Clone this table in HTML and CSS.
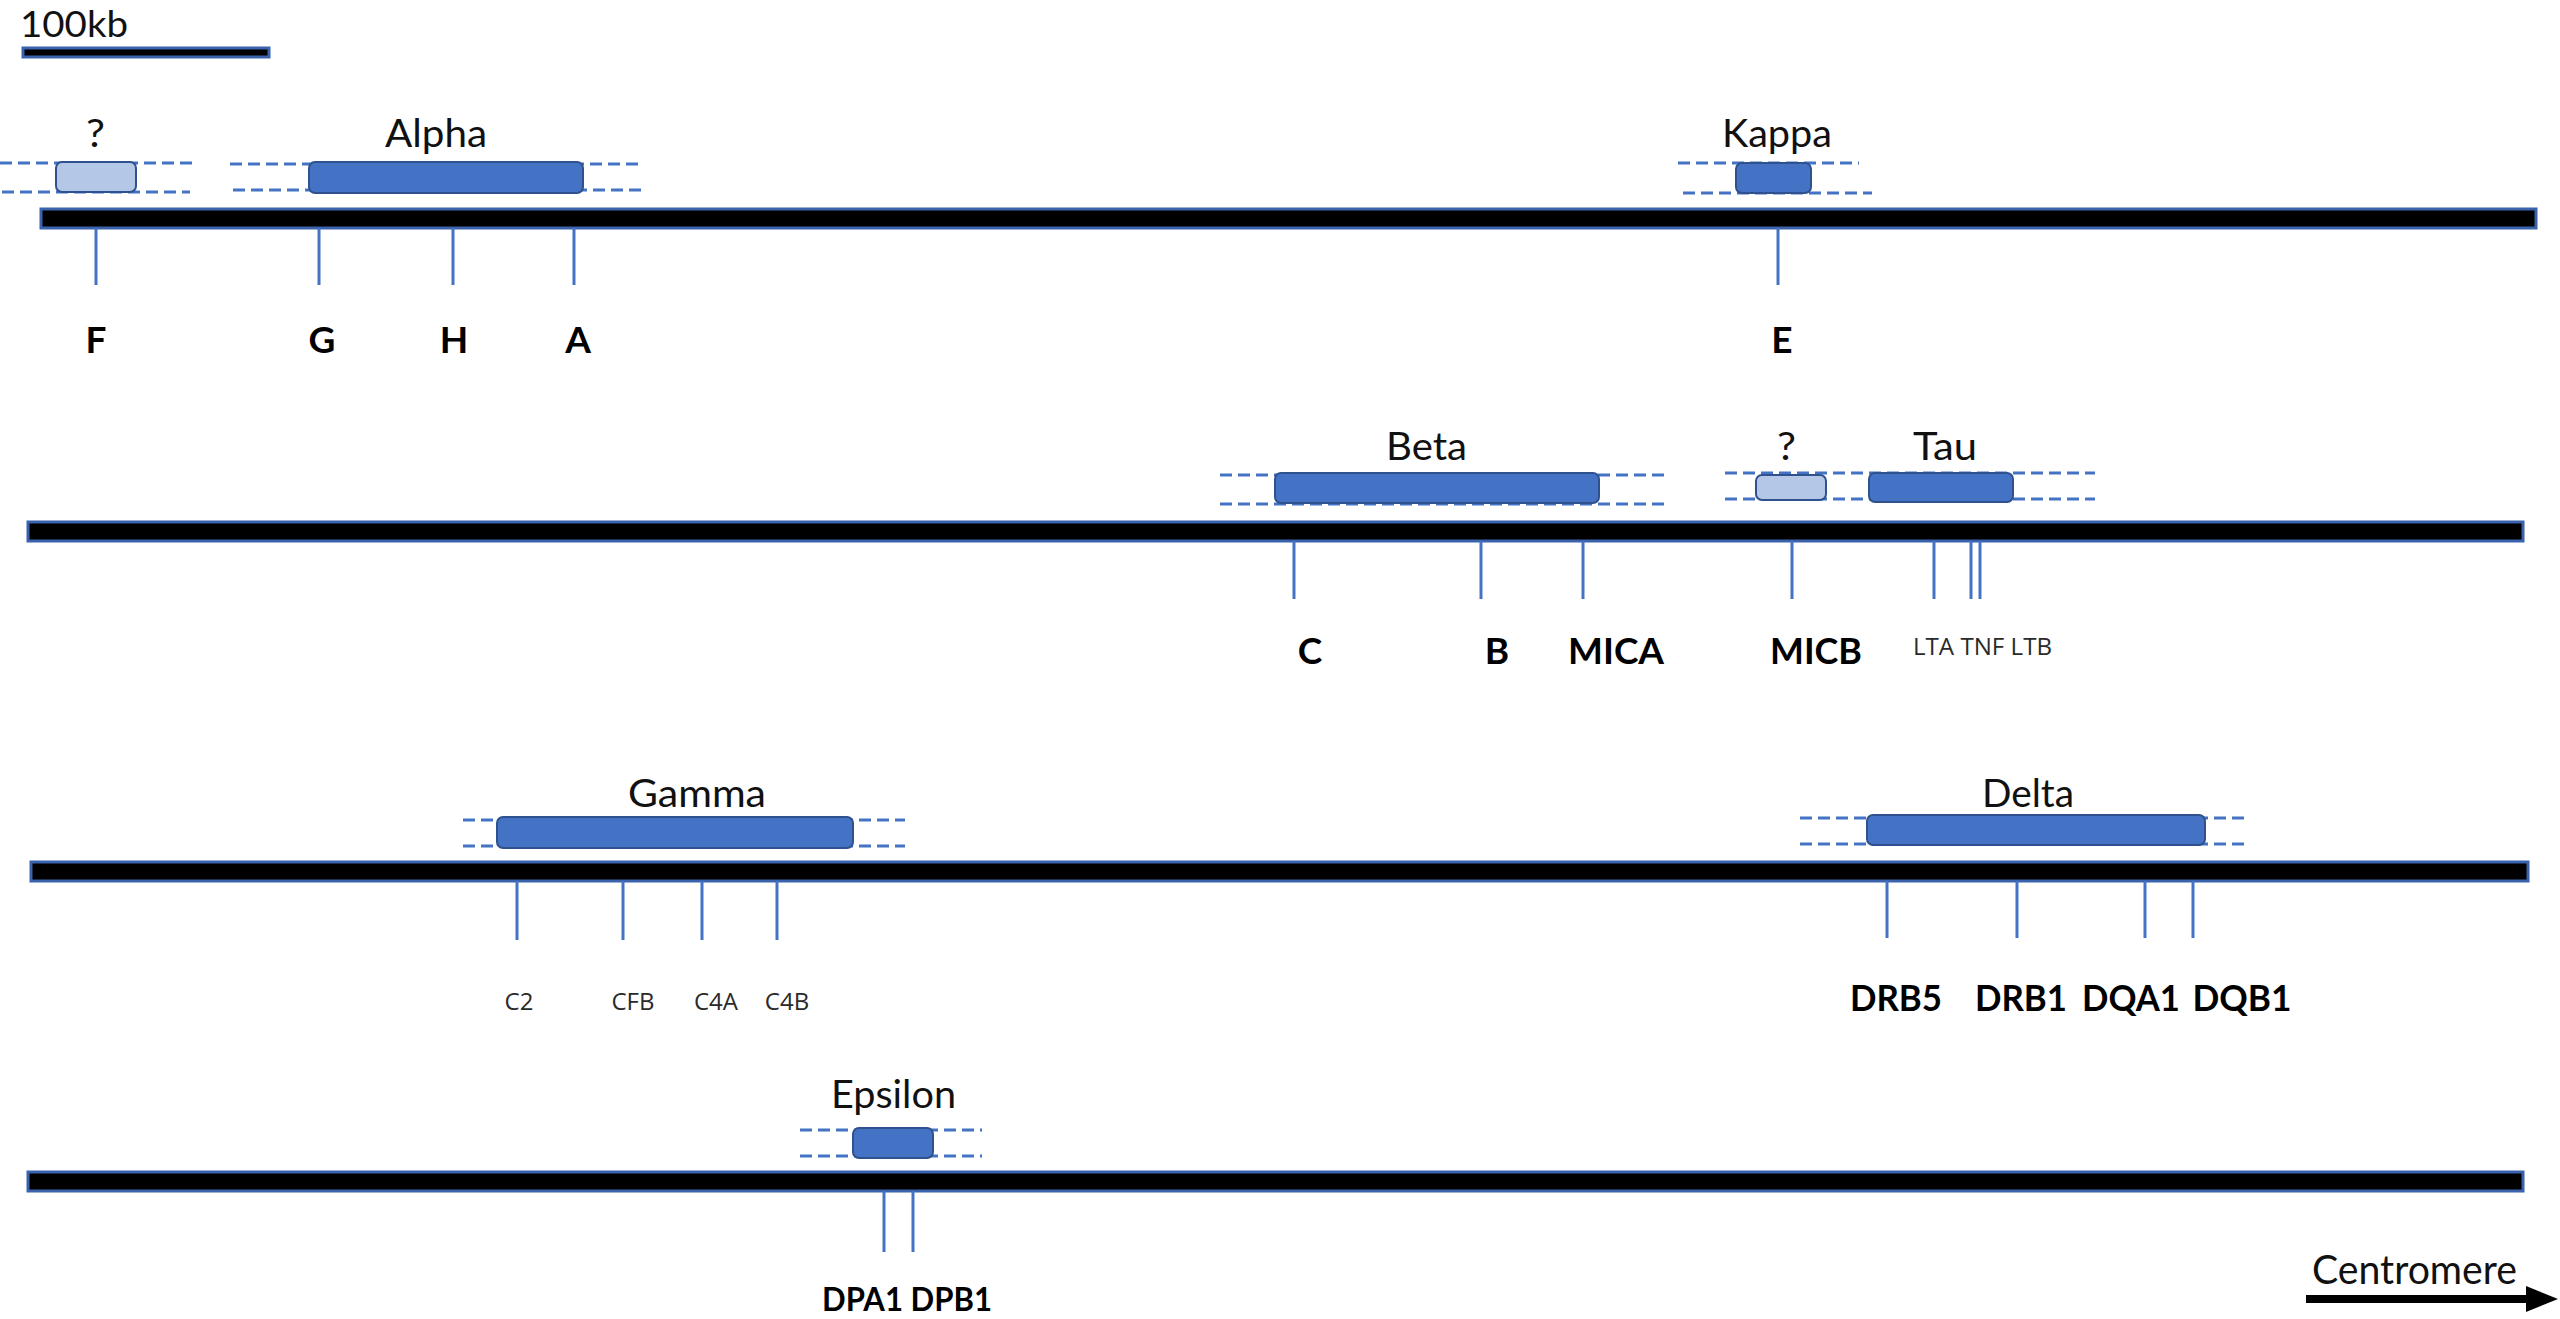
FILE: index.html
```html
<!DOCTYPE html>
<html lang="en">
<head>
<meta charset="utf-8">
<title>MHC region map</title>
<link rel="stylesheet" href="styles.css">
</head>
<body>
<svg class="map" width="2560" height="1319" viewBox="0 0 2560 1319" xmlns="http://www.w3.org/2000/svg">
  <!-- scale -->
  <text class="lbl scale-lbl" x="20" y="37" textLength="108" lengthAdjust="spacingAndGlyphs">100kb</text>
  <rect class="chrom" x="23" y="48" width="246" height="9"/>

  <!-- ROW 1 -->
  <g class="dash">
    <line x1="0" y1="163" x2="192" y2="163"/>
    <line x1="2" y1="192" x2="190" y2="192"/>
    <line x1="230" y1="164" x2="641" y2="164"/>
    <line x1="233" y1="190" x2="643" y2="190"/>
    <line x1="1678" y1="163" x2="1859" y2="163"/>
    <line x1="1683" y1="193" x2="1872" y2="193"/>
  </g>
  <rect class="box light" x="56" y="162" width="80" height="30" rx="6"/>
  <rect class="box" x="309" y="162" width="274" height="31" rx="6"/>
  <rect class="box" x="1736" y="163" width="75" height="30" rx="6"/>
  <text class="lbl" x="86" y="147" textLength="19" lengthAdjust="spacingAndGlyphs">?</text>
  <text class="lbl" x="385" y="147" textLength="102" lengthAdjust="spacingAndGlyphs">Alpha</text>
  <text class="lbl" x="1722" y="147" textLength="110" lengthAdjust="spacingAndGlyphs">Kappa</text>
  <rect class="chrom" x="41" y="209" width="2495" height="19"/>
  <g class="tick">
    <line x1="96" y1="228" x2="96" y2="285"/>
    <line x1="319" y1="228" x2="319" y2="285"/>
    <line x1="453" y1="228" x2="453" y2="285"/>
    <line x1="574" y1="228" x2="574" y2="285"/>
    <line x1="1778" y1="228" x2="1778" y2="285"/>
  </g>
  <g class="gene">
    <text x="96" y="353">F</text>
    <text x="322" y="353">G</text>
    <text x="454" y="353">H</text>
    <text x="578" y="353">A</text>
    <text x="1782" y="353">E</text>
  </g>

  <!-- ROW 2 -->
  <g class="dash">
    <line x1="1220" y1="475" x2="1664" y2="475"/>
    <line x1="1220" y1="504" x2="1664" y2="504"/>
    <line x1="1725" y1="473" x2="2095" y2="473"/>
    <line x1="1725" y1="499" x2="2095" y2="499"/>
  </g>
  <rect class="box" x="1275" y="473" width="324" height="30" rx="6"/>
  <rect class="box light" x="1756" y="475" width="70" height="25" rx="6"/>
  <rect class="box" x="1869" y="473" width="144" height="29" rx="6"/>
  <text class="lbl" x="1386" y="460" textLength="81" lengthAdjust="spacingAndGlyphs">Beta</text>
  <text class="lbl" x="1777" y="460" textLength="19" lengthAdjust="spacingAndGlyphs">?</text>
  <text class="lbl" x="1913" y="460" textLength="64" lengthAdjust="spacingAndGlyphs">Tau</text>
  <rect class="chrom" x="28" y="522" width="2495" height="19"/>
  <g class="tick">
    <line x1="1294" y1="541" x2="1294" y2="599"/>
    <line x1="1481" y1="541" x2="1481" y2="599"/>
    <line x1="1583" y1="541" x2="1583" y2="599"/>
    <line x1="1792" y1="541" x2="1792" y2="599"/>
    <line x1="1934" y1="541" x2="1934" y2="599"/>
    <line x1="1971" y1="541" x2="1971" y2="599"/>
    <line x1="1980" y1="541" x2="1980" y2="599"/>
  </g>
  <g class="gene">
    <text x="1310" y="664">C</text>
    <text x="1497" y="664">B</text>
    <text x="1616" y="664" textLength="96" lengthAdjust="spacingAndGlyphs">MICA</text>
    <text x="1816" y="664" textLength="92" lengthAdjust="spacingAndGlyphs">MICB</text>
  </g>
  <text class="small start" x="1913" y="655" textLength="139" lengthAdjust="spacingAndGlyphs">LTA TNF LTB</text>

  <!-- ROW 3 -->
  <g class="dash">
    <line x1="463" y1="820" x2="905" y2="820"/>
    <line x1="463" y1="846" x2="905" y2="846"/>
    <line x1="1800" y1="818" x2="2245" y2="818"/>
    <line x1="1800" y1="844" x2="2245" y2="844"/>
  </g>
  <rect class="box" x="497" y="817" width="356" height="31" rx="6"/>
  <rect class="box" x="1867" y="815" width="338" height="30" rx="6"/>
  <text class="lbl" x="628" y="807" textLength="138" lengthAdjust="spacingAndGlyphs">Gamma</text>
  <text class="lbl" x="1982" y="807" textLength="92" lengthAdjust="spacingAndGlyphs">Delta</text>
  <rect class="chrom" x="31" y="862" width="2497" height="19"/>
  <g class="tick">
    <line x1="517" y1="881" x2="517" y2="940"/>
    <line x1="623" y1="881" x2="623" y2="940"/>
    <line x1="702" y1="881" x2="702" y2="940"/>
    <line x1="777" y1="881" x2="777" y2="940"/>
    <line x1="1887" y1="881" x2="1887" y2="938"/>
    <line x1="2017" y1="881" x2="2017" y2="938"/>
    <line x1="2145" y1="881" x2="2145" y2="938"/>
    <line x1="2193" y1="881" x2="2193" y2="938"/>
  </g>
  <g class="small">
    <text x="519" y="1010">C2</text>
    <text x="633" y="1010">CFB</text>
    <text x="716" y="1010">C4A</text>
    <text x="787" y="1010">C4B</text>
  </g>
  <g class="gene">
    <text x="1896" y="1011" textLength="92" lengthAdjust="spacingAndGlyphs">DRB5</text>
    <text x="2021" y="1011" textLength="92" lengthAdjust="spacingAndGlyphs">DRB1</text>
    <text x="2131" y="1011" textLength="98" lengthAdjust="spacingAndGlyphs">DQA1</text>
    <text x="2242" y="1011" textLength="99" lengthAdjust="spacingAndGlyphs">DQB1</text>
  </g>

  <!-- ROW 4 -->
  <g class="dash">
    <line x1="800" y1="1130" x2="982" y2="1130"/>
    <line x1="800" y1="1156" x2="982" y2="1156"/>
  </g>
  <rect class="box" x="853" y="1128" width="80" height="30" rx="6"/>
  <text class="lbl" x="831" y="1108" textLength="125" lengthAdjust="spacingAndGlyphs">Epsilon</text>
  <rect class="chrom" x="28" y="1172" width="2495" height="19"/>
  <g class="tick">
    <line x1="884" y1="1191" x2="884" y2="1252"/>
    <line x1="913" y1="1191" x2="913" y2="1252"/>
  </g>
  <text class="gene gene-sm" x="907" y="1311" textLength="170" lengthAdjust="spacingAndGlyphs">DPA1 DPB1</text>

  <!-- centromere -->
  <text class="lbl cen" x="2312" y="1284" textLength="205" lengthAdjust="spacingAndGlyphs">Centromere</text>
  <rect class="arrow" x="2306" y="1295" width="226" height="8"/>
  <polygon class="arrow" points="2526,1286 2558,1299 2526,1312"/>
</svg>
</body>
</html>
```
FILE: styles.css
```css
html, body {
  margin: 0;
  padding: 0;
  background: #ffffff;
}
.map {
  display: block;
}
.lbl {
  font-family: Lato, "Open Sans", sans-serif;
  font-size: 38px;
  fill: #111111;
}
.scale-lbl {
  font-size: 36px;
}
.gene text, .gene {
  font-family: Lato, "Open Sans", sans-serif;
  font-weight: 700;
  font-size: 37px;
  fill: #000000;
  text-anchor: middle;
}
.gene-sm {
  font-size: 33px;
}
.small, .small text {
  font-family: "Open Sans", sans-serif;
  font-size: 24px;
  fill: #2a2a2a;
  text-anchor: middle;
}
.small.start {
  text-anchor: start;
}
.cen {
  font-size: 40px;
}
.chrom {
  fill: #000000;
  stroke: #3b62ad;
  stroke-width: 3;
}
.box {
  fill: #4472c4;
  stroke: #2f528f;
  stroke-width: 2;
}
.box.light {
  fill: #b4c7e7;
}
.dash line {
  stroke: #4472c4;
  stroke-width: 3;
  stroke-dasharray: 12 6;
}
.tick line {
  stroke: #4472c4;
  stroke-width: 3;
}
.arrow {
  fill: #000000;
}
```
